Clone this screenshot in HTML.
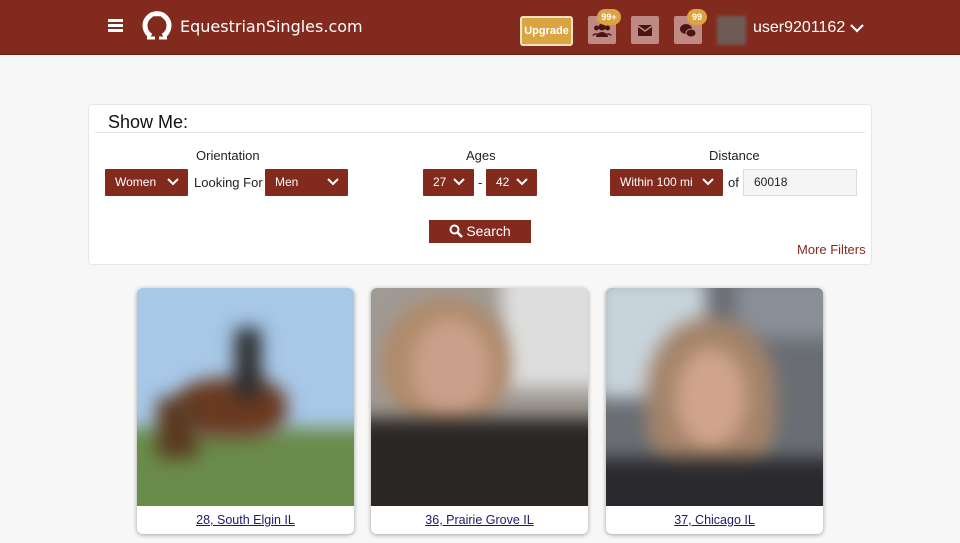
<!DOCTYPE html>
<html><head><meta charset="utf-8"><style>
*{box-sizing:border-box;margin:0;padding:0}
body{width:960px;height:543px;overflow:hidden;background:#f7f7f7;font-family:"Liberation Sans",sans-serif;position:relative}
.hdr{position:absolute;left:0;top:0;width:960px;height:55px;background:#832a1f;border-bottom:1px solid #6a1f16}
.abs{position:absolute}
.sel{position:absolute;background:#832a1f;color:#fff;font-size:12px;height:27px;line-height:27px;padding-left:10px;border-radius:1px}
.sel svg{position:absolute;right:9px;top:9px}
.lbl{position:absolute;font-size:13px;color:#222}
.card{position:absolute;top:288px;width:217px;height:246px;background:#fff;border-radius:6px;box-shadow:0 1px 5px rgba(0,0,0,.35);overflow:hidden}
.ph{position:absolute;left:0;top:0;width:217px;height:218px;overflow:hidden}
.cap{position:absolute;left:0;top:218px;width:217px;height:28px;text-align:center;line-height:28px;font-size:12.5px;color:#1a1a6e;text-decoration:underline}
.b{position:absolute;filter:blur(9px)}
.ic{position:absolute;top:16px;width:28px;height:28px;background:#c08a84;border-radius:2px}
.badge{position:absolute;background:#d9a441;color:#fff;font-size:9px;font-weight:bold;border-radius:9px;height:16px;line-height:16px;text-align:center}
</style></head><body>
<div class="hdr">
 <svg class="abs" style="left:108px;top:19px" width="16" height="14"><rect y="0" width="15" height="3" fill="#fff"/><rect y="5" width="15" height="3" fill="#fff"/><rect y="10" width="15" height="3" fill="#fff"/></svg>
 <svg class="abs" style="left:141px;top:8px" width="32" height="33" viewBox="0 0 32 33"><path d="M10 28 A12 12 0 1 1 22 28" stroke="#fff" stroke-width="5" fill="none"/><path d="M6 30 L14 30 M18 30 L26 30" stroke="#fff" stroke-width="3"/><path d="M16 10 C14 7 10 8 11 12 C12 15 16 18 16 18 C16 18 20 15 21 12 C22 8 18 7 16 10Z" fill="#832a1f"/></svg>
 <div class="abs" style="left:180px;top:17px;color:#fff;font-size:16px;font-family:'DejaVu Sans',sans-serif">EquestrianSingles.com</div>
 <div class="abs" style="left:520px;top:16px;width:53px;height:30px;background:#d9a441;border:2px solid #f5e3c0;border-radius:3px;color:#fff;font-size:11px;font-weight:bold;text-align:center;line-height:26px">Upgrade</div>
 <div class="ic" style="left:588px"><svg width="28" height="28" viewBox="0 0 28 28"><circle cx="14" cy="11" r="3.5" fill="#4a1510"/><circle cx="8.5" cy="12" r="2.5" fill="#4a1510"/><circle cx="19.5" cy="12" r="2.5" fill="#4a1510"/><path d="M8 21 a6 5 0 0 1 12 0Z M4 20 a4 4 0 0 1 6-2 M24 20 a4 4 0 0 0 -6-2" fill="#4a1510"/></svg></div>
 <div class="badge" style="left:597px;top:9px;width:24px">99+</div>
 <div class="ic" style="left:631px"><svg width="28" height="28" viewBox="0 0 28 28"><rect x="7" y="9" width="14" height="11" rx="1" fill="#4a1510"/><path d="M7 10 L14 15 L21 10" stroke="#c08a84" stroke-width="1.5" fill="none"/></svg></div>
 <div class="ic" style="left:674px"><svg width="28" height="28" viewBox="0 0 28 28"><ellipse cx="12" cy="13" rx="6" ry="5" fill="#4a1510"/><ellipse cx="17" cy="17" rx="5" ry="4" fill="#4a1510" stroke="#c08a84"/></svg></div>
 <div class="badge" style="left:687px;top:9px;width:20px">99</div>
 <div class="abs" style="left:717px;top:16px;width:29px;height:29px;background:#6e5b55;filter:blur(1.5px)"></div>
 <div class="abs" style="left:753px;top:19px;color:#fff;font-size:16px">user9201162</div>
 <svg class="abs" style="left:849px;top:23px" width="16" height="11"><path d="M2 2 L8 8 L14 2" stroke="#fff" stroke-width="2.2" fill="none"/></svg>
</div>

<div class="abs" style="left:88px;top:104px;width:784px;height:161px;background:#fff;border:1px solid #e6e6e6;border-radius:4px">
 <div class="abs" style="left:19px;top:7px;font-size:18px;color:#111">Show Me:</div>
 <div class="abs" style="left:6px;top:27px;width:770px;height:1px;background:#e3e3e3"></div>
</div>
<div class="lbl" style="left:196px;top:148px">Orientation</div>
<div class="lbl" style="left:466px;top:148px">Ages</div>
<div class="lbl" style="left:709px;top:148px">Distance</div>
<div class="sel" style="left:105px;top:169px;width:83px">Women<svg width="12" height="9"><path d="M1 1 L6 6 L11 1" stroke="#fff" stroke-width="2" fill="none"/></svg></div>
<div class="lbl" style="left:194px;top:175px">Looking For</div>
<div class="sel" style="left:265px;top:169px;width:83px">Men<svg width="12" height="9"><path d="M1 1 L6 6 L11 1" stroke="#fff" stroke-width="2" fill="none"/></svg></div>
<div class="sel" style="left:423px;top:169px;width:51px">27<svg width="12" height="9"><path d="M1 1 L6 6 L11 1" stroke="#fff" stroke-width="2" fill="none"/></svg></div>
<div class="lbl" style="left:478px;top:175px">-</div>
<div class="sel" style="left:486px;top:169px;width:51px">42<svg width="12" height="9"><path d="M1 1 L6 6 L11 1" stroke="#fff" stroke-width="2" fill="none"/></svg></div>
<div class="sel" style="left:610px;top:169px;width:113px">Within 100 mi<svg width="12" height="9"><path d="M1 1 L6 6 L11 1" stroke="#fff" stroke-width="2" fill="none"/></svg></div>
<div class="lbl" style="left:728px;top:175px">of</div>
<div class="abs" style="left:743px;top:169px;width:114px;height:27px;background:#f5f5f5;border:1px solid #ddd;font-size:12px;line-height:25px;padding-left:10px;color:#222">60018</div>
<div class="abs" style="left:429px;top:220px;width:102px;height:23px;background:#832a1f;color:#fff;font-size:14px;line-height:23px;text-align:center"><svg width="15" height="14" style="vertical-align:-2px;margin-right:2px"><circle cx="5.5" cy="5.5" r="4" stroke="#fff" stroke-width="2" fill="none"/><path d="M8.5 8.5 L13 13" stroke="#fff" stroke-width="2.5"/></svg>Search</div>
<div class="abs" style="left:797px;top:242px;font-size:13px;color:#832a1f">More Filters</div>

<div class="card" style="left:137px"><div class="ph" style="background:#a8c8e8">
 <div class="b" style="left:-20px;top:140px;width:260px;height:100px;background:#6a8c4a"></div>
 <div class="b" style="left:40px;top:90px;width:110px;height:60px;background:#6a3a20;border-radius:40%"></div>
 <div class="b" style="left:98px;top:40px;width:26px;height:70px;background:#2a2a2a"></div>
 <div class="b" style="left:20px;top:110px;width:40px;height:60px;background:#5a3a20"></div>
</div><div class="cap">28, South Elgin IL</div></div>
<div class="card" style="left:371px"><div class="ph" style="background:#a09a94">
 <div class="b" style="left:130px;top:-20px;width:110px;height:120px;background:#ddd"></div>
 <div class="b" style="left:10px;top:10px;width:130px;height:130px;background:#b08a6a;border-radius:50%"></div>
 <div class="b" style="left:40px;top:30px;width:80px;height:100px;background:#c9a08a;border-radius:50%"></div>
 <div class="b" style="left:-20px;top:130px;width:260px;height:110px;background:#2a2624"></div>
</div><div class="cap">36, Prairie Grove IL</div></div>
<div class="card" style="left:606px"><div class="ph" style="background:#6a6e74">
 <div class="b" style="left:-10px;top:-10px;width:110px;height:120px;background:#c8d4dc"></div>
 <div class="b" style="left:130px;top:-10px;width:110px;height:60px;background:#8a9098"></div>
 <div class="b" style="left:40px;top:30px;width:130px;height:170px;background:#a4846a;border-radius:45%"></div>
 <div class="b" style="left:70px;top:60px;width:70px;height:100px;background:#d0a48c;border-radius:50%"></div>
 <div class="b" style="left:-20px;top:170px;width:260px;height:70px;background:#2a2a2e"></div>
</div><div class="cap">37, Chicago IL</div></div>
</body></html>
